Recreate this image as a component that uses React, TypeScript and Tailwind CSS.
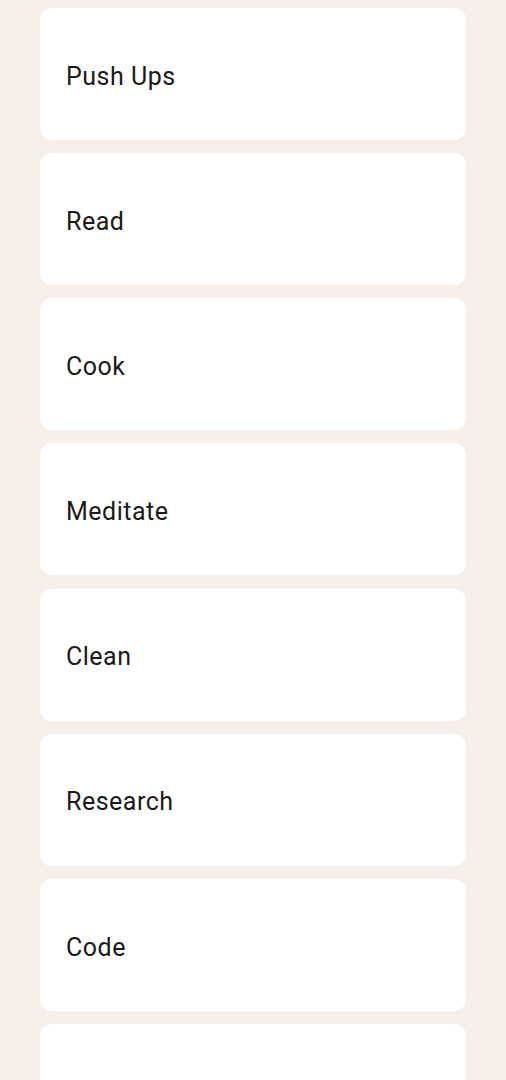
import React from 'react'

const habits = ['Push Ups', 'Read', 'Cook', 'Meditate', 'Clean', 'Research', 'Code', '']

export default function App() {
  return (
    <div className="h-[1080px] w-[506px] overflow-hidden bg-[#f6efe9] font-['Roboto',sans-serif]">
      <div className="flex flex-col gap-[13.15px] pt-2 pl-10 pr-10">
        {habits.map((name, i) => (
          <div
            key={i}
            className="flex h-[132px] w-[426px] shrink-0 items-center rounded-xl bg-white pl-[26px] pt-[5px] text-[25px] tracking-[0.02em] text-[#1a1a1a]"
          >
            {name}
          </div>
        ))}
      </div>
    </div>
  )
}
